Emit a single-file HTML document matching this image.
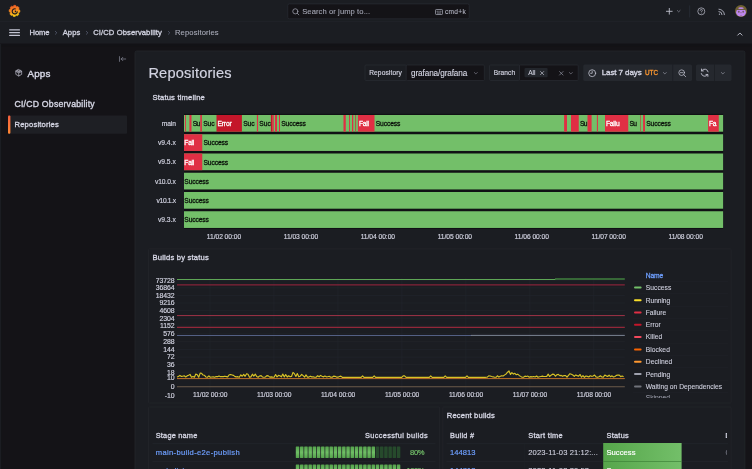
<!DOCTYPE html>
<html lang="en"><head><meta charset="utf-8"><title>Repositories - CI/CD Observability - Grafana</title>
<style>
html,body{margin:0;padding:0;}
body{width:752px;height:469px;overflow:hidden;background:#141317;position:relative;font-family:"Liberation Sans",sans-serif;-webkit-font-smoothing:antialiased;}
.t{position:absolute;white-space:nowrap;display:block;}
.b{position:absolute;box-sizing:border-box;}
svg{position:absolute;overflow:visible;}
#root{position:absolute;left:0;top:0;width:752px;height:469px;overflow:hidden;will-change:transform;}
</style></head><body><div id="root">
<svg style="left:0;top:0" width="752" height="469" viewBox="0 0 752 469"><rect x="0.00" y="0.00" width="752.00" height="43.50" fill="#1b1d22"/><rect x="0.00" y="20.90" width="752.00" height="0.60" fill="#24272d"/><rect x="0.00" y="44.00" width="752.00" height="2.40" fill="#121216"/><rect x="287.80" y="3.90" width="181.40" height="14.90" fill="#141317" rx="1.5" stroke="#2c2f37" stroke-width="0.6"/></svg>
<svg style="left:291.7px;top:7.6px" width="7.6" height="7.6" viewBox="0 0 16 16" fill="none" stroke="#a9abb9" stroke-width="1.5" stroke-linecap="round"><circle cx="7" cy="7" r="5.4"/><path d="M11.2 11.2l3.2 3.2"/></svg>
<span class="t" style="left:302.20px;top:6.00px;font-size:7.6px;line-height:11px;height:11px;color:#a3a5b3;font-weight:400;letter-spacing:0.089px;-webkit-text-stroke:0.10px #a3a5b3;">Search or jump to...</span>
<svg style="left:435px;top:8.6px" width="8" height="6" viewBox="0 0 16 12" fill="none" stroke="#a3a5b3" stroke-width="1.5"><rect x="1" y="1" width="14" height="10" rx="1.5"/><path d="M4 4.5h1M7.5 4.5h1M11 4.5h1M4.5 8h7" stroke-linecap="round"/></svg>
<span class="t" style="left:445.00px;top:7.00px;font-size:6.6px;line-height:10px;height:10px;color:#b4b5c3;font-weight:400;letter-spacing:0.275px;-webkit-text-stroke:0.09px #b4b5c3;">cmd+k</span>
<svg style="left:666.4px;top:8.2px" width="6.6" height="6.6" viewBox="0 0 16 16" fill="none" stroke="#c4c5d3" stroke-width="2.1" stroke-linecap="round"><path d="M8 1v14M1 8h14"/></svg>
<svg style="left:677.0px;top:10.0px" width="3.4" height="2.4" viewBox="0 0 10 7" fill="none" stroke="#a3a5b3" stroke-width="1.7" stroke-linecap="round" stroke-linejoin="round"><path d="M1 1.5l4 4 4-4"/></svg>
<svg style="left:0;top:0" width="752" height="469" viewBox="0 0 752 469"><rect x="689.50" y="5.40" width="0.60" height="12.00" fill="#2c323d"/></svg>
<svg style="left:696.8px;top:7.0px" width="8.6" height="8.6" viewBox="0 0 18 18" fill="none" stroke="#b4b5c3" stroke-width="1.6"><circle cx="9" cy="9" r="7.3"/><path d="M6.8 7.2c0-1.4 1-2.3 2.3-2.3s2.2.9 2.2 2c0 1.6-2.2 1.8-2.2 3.4" stroke-linecap="round"/><circle cx="9.1" cy="13" r=".7" fill="#b4b5c3" stroke="none"/></svg>
<svg style="left:718.2px;top:7.6px" width="7.6" height="7.6" viewBox="0 0 16 16" fill="none" stroke="#b4b5c3" stroke-width="1.9" stroke-linecap="round"><circle cx="3" cy="13" r="1.3" fill="#b4b5c3" stroke="none"/><path d="M2 7.5a6.5 6.5 0 0 1 6.5 6.5M2 2.5A11.5 11.5 0 0 1 13.5 14"/></svg>
<svg style="left:735px;top:5.4px" width="12" height="12" viewBox="0 0 24 24"><circle cx="12" cy="12" r="12" fill="#6f6230"/><ellipse cx="12" cy="14.600" rx="9.800" ry="8.600" fill="#bd86ee"/><ellipse cx="12" cy="6.200" rx="5.200" ry="1.500" fill="#bd86ee"/><rect x="3" y="8.300" width="18" height="1.700" fill="#5f5528"/><ellipse cx="7.600" cy="13.400" rx="1.900" ry="2.100" fill="#7a5c72"/><ellipse cx="16.400" cy="13.400" rx="1.900" ry="2.100" fill="#7a5c72"/><ellipse cx="12" cy="15.400" rx="1.400" ry=".9" fill="#6f5a3a"/><ellipse cx="12" cy="21.400" rx="1.500" ry="1" fill="#8a6a70"/></svg>
<svg style="left:9.2px;top:5.2px" width="11.0" height="12.1" viewBox="0 0 24 26.500"><defs><linearGradient id="lg" x1="0.45" y1="1" x2="0.25" y2="0"><stop offset="0" stop-color="#fcd116"/><stop offset=".5" stop-color="#f78a1e"/><stop offset="1" stop-color="#ef5a28"/></linearGradient></defs><path fill="url(#lg)" stroke="url(#lg)" stroke-width="1.2" stroke-linejoin="round" d="M10.68 0.60L14.50 0.79L15.95 3.56L16.53 3.85L19.50 3.26L22.07 6.21L21.21 9.23L21.43 9.86L23.93 11.63L23.74 15.60L21.08 17.10L20.80 17.71L21.37 20.80L18.53 23.47L15.63 22.58L15.02 22.81L13.32 25.40L9.50 25.21L8.05 22.44L7.47 22.15L4.50 22.74L1.93 19.79L2.79 16.77L2.57 16.14L0.07 14.37L0.26 10.40L2.92 8.90L3.20 8.29L2.63 5.20L5.47 2.53L8.37 3.42L8.98 3.19Z"/><path fill="none" stroke="#1a1c21" stroke-width="2.5" stroke-linecap="round" d="M13.57 8.39A5.6 5.6 0 1 0 18.11 14.87"/><circle cx="14.2" cy="14.2" r="1.700" fill="#1a1c21"/><path fill="none" stroke="#1a1c21" stroke-width="1.3" stroke-linecap="round" d="M14.20 15.73A2.0 2.0 0 0 0 14.20 12.27"/></svg>
<svg style="left:0;top:0" width="752" height="469" viewBox="0 0 752 469"><rect x="9.10" y="29.35" width="10.90" height="1.10" fill="#c4c5d3" rx="0.5"/><rect x="9.10" y="32.10" width="10.90" height="1.10" fill="#c4c5d3" rx="0.5"/><rect x="9.10" y="34.85" width="10.90" height="1.10" fill="#c4c5d3" rx="0.5"/></svg>
<span class="t" style="left:29.50px;top:27.00px;font-size:7.6px;line-height:11px;height:11px;color:#d0d1df;font-weight:400;letter-spacing:-0.068px;-webkit-text-stroke:0.32px #d0d1df;">Home</span>
<span class="t" style="left:62.75px;top:27.00px;font-size:7.6px;line-height:11px;height:11px;color:#d0d1df;font-weight:400;letter-spacing:0.044px;-webkit-text-stroke:0.32px #d0d1df;">Apps</span>
<span class="t" style="left:93.25px;top:27.00px;font-size:7.6px;line-height:11px;height:11px;color:#d0d1df;font-weight:400;letter-spacing:0.106px;-webkit-text-stroke:0.32px #d0d1df;">CI/CD Observability</span>
<span class="t" style="left:175.00px;top:27.00px;font-size:7.6px;line-height:11px;height:11px;color:#a9abb9;font-weight:400;letter-spacing:0.126px;-webkit-text-stroke:0.10px #a9abb9;">Repositories</span>
<svg style="left:54.90px;top:31.1px" width="2.2" height="3.6" viewBox="0 0 6 10" fill="none" stroke="#687089" stroke-width="1.8" stroke-linecap="round" stroke-linejoin="round"><path d="M1 1l4 4-4 4"/></svg>
<svg style="left:86.00px;top:31.1px" width="2.2" height="3.6" viewBox="0 0 6 10" fill="none" stroke="#687089" stroke-width="1.8" stroke-linecap="round" stroke-linejoin="round"><path d="M1 1l4 4-4 4"/></svg>
<svg style="left:168.00px;top:31.1px" width="2.2" height="3.6" viewBox="0 0 6 10" fill="none" stroke="#687089" stroke-width="1.8" stroke-linecap="round" stroke-linejoin="round"><path d="M1 1l4 4-4 4"/></svg>
<svg style="left:737.0px;top:31.8px" width="5.8" height="3.9" viewBox="0 0 12 8" fill="none" stroke="#c4c5d3" stroke-width="1.9" stroke-linecap="round" stroke-linejoin="round"><path d="M1.500 6.500l4.500-4.500 4.500 4.500"/></svg>
<svg style="left:118.8px;top:56.2px" width="7.2" height="6" viewBox="0 0 15 12" fill="none" stroke="#8f91a0" stroke-width="1.4" stroke-linecap="round" stroke-linejoin="round"><path d="M1 1v10M4.500 6h9.500M8 2.500L4.500 6 8 9.500"/></svg>
<svg style="left:14.9px;top:69.2px" width="7.5" height="7.6" viewBox="0 0 16 16" fill="none" stroke="#c0c1cf" stroke-width="1.5" stroke-linejoin="round" stroke-linecap="round"><path d="M8 1.200l6.200 3.400v6.800L8 14.800 1.800 11.400V4.600z"/><path d="M1.800 4.600L8 8l6.200-3.400M8 8v6.800M4.900 2.900l6.200 3.400M11.100 2.900L4.900 6.300"/></svg>
<span class="t" style="left:27.50px;top:67.00px;font-size:9.8px;line-height:14px;height:14px;color:#d4d5e3;font-weight:400;letter-spacing:0.166px;-webkit-text-stroke:0.41px #d4d5e3;">Apps</span>
<span class="t" style="left:14.50px;top:98.00px;font-size:8.7px;line-height:12px;height:12px;color:#d4d5e3;font-weight:400;letter-spacing:0.217px;-webkit-text-stroke:0.37px #d4d5e3;">CI/CD Observability</span>
<svg style="left:0;top:0" width="752" height="469" viewBox="0 0 752 469"><defs><linearGradient id="g1" x1="0" y1="0" x2="0" y2="1"><stop offset="0" stop-color="#f55f3e"/><stop offset="1" stop-color="#ff8833"/></linearGradient></defs><rect x="8.00" y="115.50" width="119.00" height="18.25" fill="#1e1f24" rx="1"/><rect x="8.00" y="115.50" width="2.40" height="18.25" fill="url(#g1)" rx="1"/></svg>
<span class="t" style="left:14.50px;top:119.00px;font-size:7.6px;line-height:11px;height:11px;color:#d4d5e3;font-weight:400;letter-spacing:0.188px;-webkit-text-stroke:0.32px #d4d5e3;">Repositories</span>
<svg style="left:0;top:0" width="752" height="469" viewBox="0 0 752 469"><rect x="0.00" y="44.00" width="1.10" height="425.00" fill="#1b1d22"/><rect x="135.00" y="51.00" width="609.90" height="429.00" fill="#1b1d22" rx="1.5" stroke="#25282d" stroke-width="0.7"/></svg>
<span class="t" style="left:148.40px;top:63.00px;font-size:14.6px;line-height:20px;height:20px;color:#d2d3e1;font-weight:400;letter-spacing:0.183px;-webkit-text-stroke:0.19px #d2d3e1;">Repositories</span>
<svg style="left:0;top:0" width="752" height="469" viewBox="0 0 752 469"><rect x="365.00" y="65.00" width="41.40" height="15.50" fill="#1b1d22" rx="1" stroke="#2c2f36" stroke-width="0.6"/></svg>
<span class="t" style="left:369.20px;top:68.00px;font-size:6.6px;line-height:10px;height:10px;color:#d0d1df;font-weight:400;letter-spacing:0.125px;-webkit-text-stroke:0.17px #d0d1df;">Repository</span>
<svg style="left:0;top:0" width="752" height="469" viewBox="0 0 752 469"><rect x="406.20" y="65.00" width="78.10" height="15.50" fill="#141317" rx="1" stroke="#2c2f36" stroke-width="0.6"/></svg>
<span class="t" style="left:411.00px;top:68.00px;font-size:8.2px;line-height:12px;height:12px;color:#d6d7e5;font-weight:400;letter-spacing:-0.107px;-webkit-text-stroke:0.11px #d6d7e5;">grafana/grafana</span>
<svg style="left:474.3px;top:72.0px" width="3.6" height="2.5" viewBox="0 0 10 7" fill="none" stroke="#9d9fac" stroke-width="1.6" stroke-linecap="round" stroke-linejoin="round"><path d="M1 1.500l4 4 4-4"/></svg>
<svg style="left:0;top:0" width="752" height="469" viewBox="0 0 752 469"><rect x="489.50" y="65.00" width="30.20" height="15.50" fill="#1b1d22" rx="1" stroke="#2c2f36" stroke-width="0.6"/></svg>
<span class="t" style="left:493.70px;top:68.00px;font-size:6.6px;line-height:10px;height:10px;color:#d0d1df;font-weight:400;letter-spacing:0.098px;-webkit-text-stroke:0.17px #d0d1df;">Branch</span>
<svg style="left:0;top:0" width="752" height="469" viewBox="0 0 752 469"><rect x="519.50" y="65.00" width="58.70" height="15.50" fill="#141317" rx="1" stroke="#2c2f36" stroke-width="0.6"/><rect x="524.50" y="68.00" width="23.10" height="9.20" fill="#23262c" rx="1"/></svg>
<span class="t" style="left:528.20px;top:68.00px;font-size:6.6px;line-height:10px;height:10px;color:#d0d1df;font-weight:400;letter-spacing:-0.045px;-webkit-text-stroke:0.09px #d0d1df;">All</span>
<svg style="left:539.6px;top:70.6px" width="4.200" height="4.200" viewBox="0 0 8 8" fill="none" stroke="#c4c5d3" stroke-width="1.300" stroke-linecap="round"><path d="M1 1l6 6M7 1L1 7"/></svg>
<svg style="left:559.2px;top:70.6px" width="4.600" height="4.600" viewBox="0 0 8 8" fill="none" stroke="#8f91a0" stroke-width="1.200" stroke-linecap="round"><path d="M1 1l6 6M7 1L1 7"/></svg>
<svg style="left:568.8px;top:72.0px" width="3.6" height="2.5" viewBox="0 0 10 7" fill="none" stroke="#9d9fac" stroke-width="1.6" stroke-linecap="round" stroke-linejoin="round"><path d="M1 1.500l4 4 4-4"/></svg>
<svg style="left:0;top:0" width="752" height="469" viewBox="0 0 752 469"><rect x="583.25" y="64.50" width="108.75" height="16.50" fill="#25282e" rx="1.5"/><rect x="672.50" y="64.50" width="0.60" height="16.50" fill="#191b20"/></svg>
<svg style="left:588.0px;top:68.6px" width="8.4" height="8.4" viewBox="0 0 16 16" fill="none" stroke="#c4c5d3" stroke-width="1.5" stroke-linecap="round"><circle cx="8" cy="8" r="6.600"/><path d="M8 4v4.200H5"/></svg>
<span class="t" style="left:601.75px;top:67.00px;font-size:8.0px;line-height:12px;height:12px;color:#d4d5e3;font-weight:400;letter-spacing:-0.097px;-webkit-text-stroke:0.34px #d4d5e3;">Last 7 days</span>
<span class="t" style="left:645.00px;top:68.00px;font-size:6.4px;line-height:10px;height:10px;color:#ff9830;font-weight:400;letter-spacing:-0.051px;-webkit-text-stroke:0.27px #ff9830;">UTC</span>
<svg style="left:662.8px;top:72.0px" width="3.6" height="2.5" viewBox="0 0 10 7" fill="none" stroke="#b4b5c3" stroke-width="1.6" stroke-linecap="round" stroke-linejoin="round"><path d="M1 1.500l4 4 4-4"/></svg>
<svg style="left:677.8px;top:68.6px" width="8.4" height="8.4" viewBox="0 0 16 16" fill="none" stroke="#c4c5d3" stroke-width="1.4" stroke-linecap="round"><circle cx="7" cy="7" r="5.400"/><path d="M11 11l3.800 3.800M4.600 7h4.800"/></svg>
<svg style="left:0;top:0" width="752" height="469" viewBox="0 0 752 469"><rect x="696.00" y="64.50" width="35.50" height="16.50" fill="#25282e" rx="1.5"/><rect x="714.40" y="64.50" width="0.60" height="16.50" fill="#191b20"/></svg>
<svg style="left:700.4px;top:68.0px" width="9.4" height="9.4" viewBox="0 0 16 16" fill="none" stroke="#c4c5d3" stroke-width="1.5" stroke-linecap="round" stroke-linejoin="round"><path d="M13.800 6.500A6 6 0 0 0 3 4.600M2.200 9.500A6 6 0 0 0 13 11.400"/><path d="M2.600 1.800v3.200h3.200M13.400 14.200v-3.200h-3.200"/></svg>
<svg style="left:721.3px;top:72.0px" width="3.6" height="2.5" viewBox="0 0 10 7" fill="none" stroke="#b4b5c3" stroke-width="1.6" stroke-linecap="round" stroke-linejoin="round"><path d="M1 1.500l4 4 4-4"/></svg>
<span class="t" style="left:152.50px;top:92.00px;font-size:7.6px;line-height:11px;height:11px;color:#d4d5e3;font-weight:400;letter-spacing:0.177px;-webkit-text-stroke:0.32px #d4d5e3;">Status timeline</span>
<svg style="left:0;top:0" width="752" height="469" viewBox="0 0 752 469"><rect x="184.00" y="113.80" width="539.10" height="115.15" fill="#101114"/><rect x="184.00" y="115.00" width="539.10" height="16.70" fill="#73bf69"/><rect x="185.00" y="115.00" width="0.90" height="16.70" fill="#e02f44"/><rect x="189.40" y="115.00" width="2.10" height="16.70" fill="#e02f44"/><rect x="200.25" y="115.00" width="1.65" height="16.70" fill="#e02f44"/><rect x="216.50" y="115.00" width="25.40" height="16.70" fill="#c4162a"/><rect x="256.90" y="115.00" width="1.20" height="16.70" fill="#e02f44"/><rect x="270.90" y="115.00" width="1.30" height="16.70" fill="#c4162a"/><rect x="272.20" y="115.00" width="1.55" height="16.70" fill="#e02f44"/><rect x="275.00" y="115.00" width="2.00" height="16.70" fill="#e02f44"/><rect x="279.00" y="115.00" width="1.00" height="16.70" fill="#e02f44"/><rect x="343.50" y="115.00" width="2.25" height="16.70" fill="#e02f44"/><rect x="349.10" y="115.00" width="0.90" height="16.70" fill="#e02f44"/><rect x="352.00" y="115.00" width="1.25" height="16.70" fill="#e02f44"/><rect x="355.10" y="115.00" width="1.00" height="16.70" fill="#b5533f"/><rect x="357.90" y="115.00" width="16.60" height="16.70" fill="#e02f44"/><rect x="564.10" y="115.00" width="2.90" height="16.70" fill="#e02f44"/><rect x="571.00" y="115.00" width="7.75" height="16.70" fill="#e02f44"/><rect x="587.50" y="115.00" width="4.10" height="16.70" fill="#e02f44"/><rect x="596.90" y="115.00" width="1.00" height="16.70" fill="#e02f44"/><rect x="605.00" y="115.00" width="23.25" height="16.70" fill="#e02f44"/><rect x="640.25" y="115.00" width="0.75" height="16.70" fill="#b5533f"/><rect x="643.10" y="115.00" width="1.90" height="16.70" fill="#e02f44"/><rect x="708.10" y="115.00" width="10.65" height="16.70" fill="#e02f44"/><rect x="184.00" y="134.25" width="539.10" height="16.70" fill="#73bf69"/><rect x="184.00" y="134.25" width="18.25" height="16.70" fill="#e02f44"/><rect x="184.00" y="153.50" width="539.10" height="16.70" fill="#73bf69"/><rect x="184.00" y="153.50" width="18.25" height="16.70" fill="#e02f44"/><rect x="184.00" y="172.75" width="539.10" height="16.70" fill="#73bf69"/><rect x="184.00" y="192.00" width="539.10" height="16.70" fill="#73bf69"/><rect x="184.00" y="211.25" width="539.10" height="16.70" fill="#73bf69"/></svg>
<span class="t" style="left:192.75px;top:119.00px;font-size:6.7px;line-height:10px;height:10px;color:#0b120b;font-weight:400;letter-spacing:-0.598px;-webkit-text-stroke:0.28px #0b120b;">Su</span>
<span class="t" style="left:203.15px;top:119.00px;font-size:6.7px;line-height:10px;height:10px;color:#0b120b;font-weight:400;letter-spacing:-0.048px;-webkit-text-stroke:0.28px #0b120b;">Suc</span>
<span class="t" style="left:217.50px;top:119.00px;font-size:6.7px;line-height:10px;height:10px;color:#ffffff;font-weight:400;letter-spacing:-0.178px;-webkit-text-stroke:0.28px #ffffff;">Error</span>
<span class="t" style="left:243.15px;top:119.00px;font-size:6.7px;line-height:10px;height:10px;color:#0b120b;font-weight:400;letter-spacing:-0.048px;-webkit-text-stroke:0.28px #0b120b;">Suc</span>
<span class="t" style="left:259.35px;top:119.00px;font-size:6.7px;line-height:10px;height:10px;color:#0b120b;font-weight:400;letter-spacing:-0.048px;-webkit-text-stroke:0.28px #0b120b;">Suc</span>
<span class="t" style="left:281.25px;top:119.00px;font-size:6.7px;line-height:10px;height:10px;color:#0b120b;font-weight:400;letter-spacing:-0.103px;-webkit-text-stroke:0.28px #0b120b;">Success</span>
<span class="t" style="left:358.90px;top:119.00px;font-size:6.7px;line-height:10px;height:10px;color:#ffffff;font-weight:400;letter-spacing:-0.249px;-webkit-text-stroke:0.28px #ffffff;">Fail</span>
<span class="t" style="left:375.75px;top:119.00px;font-size:6.7px;line-height:10px;height:10px;color:#0b120b;font-weight:400;letter-spacing:-0.103px;-webkit-text-stroke:0.28px #0b120b;">Success</span>
<span class="t" style="left:580.00px;top:119.00px;font-size:6.7px;line-height:10px;height:10px;color:#0b120b;font-weight:400;letter-spacing:-0.598px;-webkit-text-stroke:0.28px #0b120b;">Su</span>
<span class="t" style="left:606.00px;top:119.00px;font-size:6.7px;line-height:10px;height:10px;color:#ffffff;font-weight:400;letter-spacing:-0.224px;-webkit-text-stroke:0.28px #ffffff;">Failu</span>
<span class="t" style="left:629.50px;top:119.00px;font-size:6.7px;line-height:10px;height:10px;color:#0b120b;font-weight:400;letter-spacing:-0.598px;-webkit-text-stroke:0.28px #0b120b;">Su</span>
<span class="t" style="left:646.25px;top:119.00px;font-size:6.7px;line-height:10px;height:10px;color:#0b120b;font-weight:400;letter-spacing:-0.103px;-webkit-text-stroke:0.28px #0b120b;">Success</span>
<span class="t" style="left:709.10px;top:119.00px;font-size:6.7px;line-height:10px;height:10px;color:#ffffff;font-weight:400;letter-spacing:-0.459px;-webkit-text-stroke:0.28px #ffffff;">Fa</span>
<span class="t" style="left:161.80px;top:119.00px;font-size:6.7px;line-height:10px;height:10px;color:#d0d1df;font-weight:400;letter-spacing:-0.131px;-webkit-text-stroke:0.17px #d0d1df;">main</span>
<span class="t" style="left:184.30px;top:138.00px;font-size:6.7px;line-height:10px;height:10px;color:#ffffff;font-weight:400;letter-spacing:-0.249px;-webkit-text-stroke:0.28px #ffffff;">Fail</span>
<span class="t" style="left:203.50px;top:138.00px;font-size:6.7px;line-height:10px;height:10px;color:#0b120b;font-weight:400;letter-spacing:-0.103px;-webkit-text-stroke:0.28px #0b120b;">Success</span>
<span class="t" style="left:157.90px;top:138.00px;font-size:6.7px;line-height:10px;height:10px;color:#d0d1df;font-weight:400;letter-spacing:0.004px;-webkit-text-stroke:0.17px #d0d1df;">v9.4.x</span>
<span class="t" style="left:184.30px;top:158.00px;font-size:6.7px;line-height:10px;height:10px;color:#ffffff;font-weight:400;letter-spacing:-0.249px;-webkit-text-stroke:0.28px #ffffff;">Fail</span>
<span class="t" style="left:203.50px;top:158.00px;font-size:6.7px;line-height:10px;height:10px;color:#0b120b;font-weight:400;letter-spacing:-0.103px;-webkit-text-stroke:0.28px #0b120b;">Success</span>
<span class="t" style="left:157.90px;top:157.00px;font-size:6.7px;line-height:10px;height:10px;color:#d0d1df;font-weight:400;letter-spacing:0.004px;-webkit-text-stroke:0.17px #d0d1df;">v9.5.x</span>
<span class="t" style="left:184.30px;top:177.00px;font-size:6.7px;line-height:10px;height:10px;color:#0b120b;font-weight:400;letter-spacing:-0.103px;-webkit-text-stroke:0.28px #0b120b;">Success</span>
<span class="t" style="left:154.90px;top:177.00px;font-size:6.7px;line-height:10px;height:10px;color:#d0d1df;font-weight:400;letter-spacing:-0.100px;-webkit-text-stroke:0.17px #d0d1df;">v10.0.x</span>
<span class="t" style="left:184.30px;top:196.00px;font-size:6.7px;line-height:10px;height:10px;color:#0b120b;font-weight:400;letter-spacing:-0.103px;-webkit-text-stroke:0.28px #0b120b;">Success</span>
<span class="t" style="left:156.60px;top:196.00px;font-size:6.7px;line-height:10px;height:10px;color:#d0d1df;font-weight:400;letter-spacing:-0.343px;-webkit-text-stroke:0.17px #d0d1df;">v10.1.x</span>
<span class="t" style="left:184.30px;top:215.00px;font-size:6.7px;line-height:10px;height:10px;color:#0b120b;font-weight:400;letter-spacing:-0.103px;-webkit-text-stroke:0.28px #0b120b;">Success</span>
<span class="t" style="left:157.90px;top:215.00px;font-size:6.7px;line-height:10px;height:10px;color:#d0d1df;font-weight:400;letter-spacing:0.004px;-webkit-text-stroke:0.17px #d0d1df;">v9.3.x</span>
<span class="t" style="left:206.80px;top:232.00px;font-size:6.7px;line-height:10px;height:10px;color:#d0d1df;font-weight:400;letter-spacing:-0.045px;-webkit-text-stroke:0.17px #d0d1df;">11/02 00:00</span>
<span class="t" style="left:283.75px;top:232.00px;font-size:6.7px;line-height:10px;height:10px;color:#d0d1df;font-weight:400;letter-spacing:-0.045px;-webkit-text-stroke:0.17px #d0d1df;">11/03 00:00</span>
<span class="t" style="left:360.70px;top:232.00px;font-size:6.7px;line-height:10px;height:10px;color:#d0d1df;font-weight:400;letter-spacing:-0.045px;-webkit-text-stroke:0.17px #d0d1df;">11/04 00:00</span>
<span class="t" style="left:437.65px;top:232.00px;font-size:6.7px;line-height:10px;height:10px;color:#d0d1df;font-weight:400;letter-spacing:-0.045px;-webkit-text-stroke:0.17px #d0d1df;">11/05 00:00</span>
<span class="t" style="left:514.60px;top:232.00px;font-size:6.7px;line-height:10px;height:10px;color:#d0d1df;font-weight:400;letter-spacing:-0.045px;-webkit-text-stroke:0.17px #d0d1df;">11/06 00:00</span>
<span class="t" style="left:591.55px;top:232.00px;font-size:6.7px;line-height:10px;height:10px;color:#d0d1df;font-weight:400;letter-spacing:-0.045px;-webkit-text-stroke:0.17px #d0d1df;">11/07 00:00</span>
<span class="t" style="left:668.50px;top:232.00px;font-size:6.7px;line-height:10px;height:10px;color:#d0d1df;font-weight:400;letter-spacing:-0.045px;-webkit-text-stroke:0.17px #d0d1df;">11/08 00:00</span>
<svg style="left:0;top:0" width="752" height="469" viewBox="0 0 752 469"><rect x="148.50" y="248.90" width="582.70" height="154.10" fill="#1b1d22" rx="1" stroke="#26282e" stroke-width="0.6"/></svg>
<span class="t" style="left:152.50px;top:252.00px;font-size:7.6px;line-height:11px;height:11px;color:#d4d5e3;font-weight:400;letter-spacing:0.205px;-webkit-text-stroke:0.32px #d4d5e3;">Builds by status</span>
<svg style="left:0;top:0" width="752" height="469" viewBox="0 0 752 469" fill="none"><path d="M177.0 280.10H624.8" stroke="#24272d" stroke-width="0.6"/><path d="M177.0 287.85H624.8" stroke="#24272d" stroke-width="0.6"/><path d="M177.0 295.40H624.8" stroke="#24272d" stroke-width="0.6"/><path d="M177.0 303.00H624.8" stroke="#24272d" stroke-width="0.6"/><path d="M177.0 310.60H624.8" stroke="#24272d" stroke-width="0.6"/><path d="M177.0 318.20H624.8" stroke="#24272d" stroke-width="0.6"/><path d="M177.0 326.00H624.8" stroke="#24272d" stroke-width="0.6"/><path d="M177.0 333.80H624.8" stroke="#24272d" stroke-width="0.6"/><path d="M177.0 341.70H624.8" stroke="#24272d" stroke-width="0.6"/><path d="M177.0 349.40H624.8" stroke="#24272d" stroke-width="0.6"/><path d="M177.0 357.10H624.8" stroke="#24272d" stroke-width="0.6"/><path d="M177.0 364.70H624.8" stroke="#24272d" stroke-width="0.6"/><path d="M177.0 372.20H624.8" stroke="#24272d" stroke-width="0.6"/><path d="M177.0 386.70H624.8" stroke="#24272d" stroke-width="0.6"/><path d="M210.00 278V392" stroke="#24272d" stroke-width="0.6"/><path d="M273.97 278V392" stroke="#24272d" stroke-width="0.6"/><path d="M337.94 278V392" stroke="#24272d" stroke-width="0.6"/><path d="M401.91 278V392" stroke="#24272d" stroke-width="0.6"/><path d="M465.88 278V392" stroke="#24272d" stroke-width="0.6"/><path d="M529.85 278V392" stroke="#24272d" stroke-width="0.6"/><path d="M593.82 278V392" stroke="#24272d" stroke-width="0.6"/><path d="M177.0 279.5H555.5" stroke="#5ea656" stroke-width="1.1"/><path d="M555 279.0H624.8" stroke="#41803f" stroke-width="1.7"/><path d="M177.0 284.8H624.8" stroke="#862338" stroke-width="1.15"/><path d="M177.0 315.6H624.8" stroke="#a9344a" stroke-width="0.95"/><path d="M177.0 327.3H624.8" stroke="#b92b41" stroke-width="0.95"/><path d="M177.0 335.5H471.5" stroke="#56648a" stroke-width="0.95"/><path d="M471 335.4H624.8" stroke="#7c8494" stroke-width="1.0"/><path d="M177.0 386.8H624.8" stroke="#6b5a49" stroke-width="1.1"/><path d="M177.0 376.84 L178.4 376.51 L179.9 375.37 L181.3 376.44 L182.8 376.20 L184.2 375.81 L185.7 376.98 L187.1 375.86 L188.6 375.27 L190.0 374.37 L191.5 377.15 L192.9 376.49 L194.4 377.15 L195.8 374.02 L197.3 374.66 L198.7 377.25 L200.2 373.11 L201.6 373.30 L203.1 375.05 L204.5 375.30 L206.0 377.02 L207.4 377.29 L208.9 375.91 L210.3 377.24 L211.8 377.01 L213.2 376.93 L214.7 377.28 L216.1 376.54 L217.6 376.67 L219.0 375.92 L220.5 376.69 L221.9 376.49 L223.4 376.64 L224.8 376.20 L226.3 376.57 L227.7 376.90 L229.2 374.73 L230.6 374.55 L232.1 375.00 L233.5 375.39 L235.0 376.66 L236.4 376.87 L237.9 376.69 L239.3 377.21 L240.8 374.77 L242.2 376.26 L243.7 374.31 L245.1 376.30 L246.6 373.73 L248.0 374.31 L249.5 377.30 L250.9 376.89 L252.4 374.21 L253.8 376.12 L255.3 374.16 L256.7 376.47 L258.2 377.23 L259.6 375.95 L261.1 375.67 L262.5 376.98 L264.0 377.24 L265.4 377.00 L266.9 375.66 L268.3 375.90 L269.8 377.18 L271.2 376.91 L272.7 377.18 L274.1 377.23 L275.6 374.57 L277.0 376.94 L278.5 375.38 L279.9 375.82 L281.4 376.83 L282.8 374.09 L284.3 377.00 L285.7 374.48 L287.2 377.04 L288.6 375.72 L290.1 376.69 L291.5 376.47 L293.0 372.42 L294.4 373.67 L295.9 376.41 L297.3 373.52 L298.8 376.83 L300.2 376.24 L301.7 374.45 L303.1 375.58 L304.6 377.19 L306.0 374.92 L307.5 377.07 L308.9 377.06 L310.4 376.20 L311.8 376.88 L313.3 376.87 L314.7 377.23 L316.2 377.20 L317.6 375.73 L319.1 376.80 L320.5 375.40 L322.0 376.28 L323.4 376.87 L324.9 376.07 L326.3 376.83 L327.8 376.70 L329.2 376.24 L330.7 377.18 L332.1 377.21 L333.6 376.16 L335.0 376.32 L336.5 377.11 L337.9 377.17 L339.4 376.45 L340.8 376.11 L342.3 377.30 L343.7 377.30 L345.2 377.30 L346.6 377.30 L348.1 377.30 L349.5 377.30 L351.0 377.30 L352.4 377.30 L353.9 377.30 L355.3 377.30 L356.8 377.30 L358.2 377.30 L359.7 377.30 L361.1 377.30 L362.6 375.80 L364.0 377.30 L365.5 377.30 L366.9 377.30 L368.4 377.30 L369.8 377.30 L371.3 377.30 L372.7 377.30 L374.2 375.80 L375.6 377.30 L377.1 377.30 L378.5 377.30 L380.0 377.30 L381.4 377.30 L382.9 377.30 L384.3 377.30 L385.8 377.30 L387.2 377.30 L388.7 377.30 L390.1 377.30 L391.6 377.30 L393.0 377.30 L394.5 377.30 L395.9 377.30 L397.4 377.30 L398.8 377.30 L400.3 377.30 L401.7 377.30 L403.2 375.80 L404.6 375.80 L406.1 377.30 L407.5 377.30 L409.0 377.30 L410.4 377.30 L411.9 377.30 L413.3 377.30 L414.8 377.30 L416.2 377.30 L417.7 377.30 L419.1 377.30 L420.6 377.30 L422.0 377.30 L423.5 377.30 L424.9 377.30 L426.4 377.30 L427.8 377.30 L429.3 377.30 L430.7 375.80 L432.2 377.30 L433.6 377.30 L435.1 377.30 L436.5 377.30 L438.0 377.30 L439.4 377.30 L440.9 377.30 L442.3 377.30 L443.8 377.30 L445.2 375.80 L446.7 377.30 L448.1 377.30 L449.6 377.30 L451.0 377.30 L452.5 377.30 L453.9 377.30 L455.4 377.30 L456.8 377.30 L458.3 377.30 L459.7 377.30 L461.2 377.30 L462.6 377.30 L464.1 377.30 L465.5 377.30 L467.0 375.80 L468.4 377.30 L469.9 377.30 L471.3 377.30 L472.8 377.30 L474.2 377.30 L475.7 377.30 L477.1 377.30 L478.6 377.30 L480.0 377.30 L481.5 377.30 L482.9 377.30 L484.4 377.30 L485.8 377.30 L487.3 377.14 L488.7 375.81 L490.2 375.96 L491.6 376.51 L493.1 376.82 L494.5 377.23 L496.0 377.28 L497.4 375.78 L498.9 377.09 L500.3 376.28 L501.8 375.69 L503.2 376.03 L504.7 374.86 L506.1 373.95 L507.6 372.20 L509.0 370.96 L510.5 374.44 L511.9 372.62 L513.4 374.11 L514.8 373.32 L516.3 374.72 L517.7 374.18 L519.2 375.41 L520.6 376.38 L522.1 377.29 L523.5 377.30 L525.0 376.16 L526.4 376.51 L527.9 376.07 L529.3 377.29 L530.8 376.61 L532.2 376.83 L533.7 376.46 L535.1 377.04 L536.6 376.00 L538.0 377.27 L539.5 376.74 L540.9 376.45 L542.4 376.18 L543.8 376.45 L545.3 376.51 L546.7 376.36 L548.2 374.12 L549.6 376.47 L551.1 375.18 L552.5 374.19 L554.0 374.33 L555.4 376.24 L556.9 374.71 L558.3 374.37 L559.8 375.65 L561.2 375.44 L562.7 376.36 L564.1 375.61 L565.6 375.50 L567.0 377.19 L568.5 375.38 L569.9 373.73 L571.4 374.29 L572.8 374.99 L574.3 376.34 L575.7 374.96 L577.2 375.62 L578.6 376.16 L580.1 374.49 L581.5 377.19 L583.0 375.56 L584.4 377.28 L585.9 376.02 L587.3 376.37 L588.8 376.97 L590.2 375.73 L591.7 376.32 L593.1 375.99 L594.6 374.98 L596.0 376.91 L597.5 377.30 L599.0 376.82 L600.4 375.79 L601.9 377.02 L603.3 377.08 L604.8 375.04 L606.2 375.85 L607.7 376.47 L609.1 375.09 L610.6 376.76 L612.0 375.83 L613.5 377.03 L614.9 376.50 L616.4 375.38 L617.8 375.01 L619.3 375.13 L620.7 376.62 L622.2 376.08 L623.6 376.78" stroke="#d8c326" stroke-width="1.15" stroke-linejoin="round"/><path d="M177.0 378.6H624.8" stroke="#c0712a" stroke-width="1.0"/></svg>
<span class="t" style="left:155.70px;top:276.00px;font-size:6.9px;line-height:10px;height:10px;color:#d0d1df;font-weight:400;letter-spacing:-0.058px;-webkit-text-stroke:0.17px #d0d1df;">73728</span>
<span class="t" style="left:155.70px;top:283.00px;font-size:6.9px;line-height:10px;height:10px;color:#d0d1df;font-weight:400;letter-spacing:-0.058px;-webkit-text-stroke:0.17px #d0d1df;">36864</span>
<span class="t" style="left:155.70px;top:291.00px;font-size:6.9px;line-height:10px;height:10px;color:#d0d1df;font-weight:400;letter-spacing:-0.058px;-webkit-text-stroke:0.17px #d0d1df;">18432</span>
<span class="t" style="left:159.48px;top:298.00px;font-size:6.9px;line-height:10px;height:10px;color:#d0d1df;font-weight:400;letter-spacing:-0.058px;-webkit-text-stroke:0.17px #d0d1df;">9216</span>
<span class="t" style="left:159.48px;top:306.00px;font-size:6.9px;line-height:10px;height:10px;color:#d0d1df;font-weight:400;letter-spacing:-0.058px;-webkit-text-stroke:0.17px #d0d1df;">4608</span>
<span class="t" style="left:159.48px;top:314.00px;font-size:6.9px;line-height:10px;height:10px;color:#d0d1df;font-weight:400;letter-spacing:-0.058px;-webkit-text-stroke:0.17px #d0d1df;">2304</span>
<span class="t" style="left:159.98px;top:321.00px;font-size:6.9px;line-height:10px;height:10px;color:#d0d1df;font-weight:400;letter-spacing:-0.056px;-webkit-text-stroke:0.17px #d0d1df;">1152</span>
<span class="t" style="left:163.26px;top:329.00px;font-size:6.9px;line-height:10px;height:10px;color:#d0d1df;font-weight:400;letter-spacing:-0.058px;-webkit-text-stroke:0.17px #d0d1df;">576</span>
<span class="t" style="left:163.26px;top:337.00px;font-size:6.9px;line-height:10px;height:10px;color:#d0d1df;font-weight:400;letter-spacing:-0.058px;-webkit-text-stroke:0.17px #d0d1df;">288</span>
<span class="t" style="left:163.26px;top:345.00px;font-size:6.9px;line-height:10px;height:10px;color:#d0d1df;font-weight:400;letter-spacing:-0.058px;-webkit-text-stroke:0.17px #d0d1df;">144</span>
<span class="t" style="left:167.04px;top:352.00px;font-size:6.9px;line-height:10px;height:10px;color:#d0d1df;font-weight:400;letter-spacing:-0.058px;-webkit-text-stroke:0.17px #d0d1df;">72</span>
<span class="t" style="left:167.04px;top:360.00px;font-size:6.9px;line-height:10px;height:10px;color:#d0d1df;font-weight:400;letter-spacing:-0.058px;-webkit-text-stroke:0.17px #d0d1df;">36</span>
<span class="t" style="left:167.04px;top:368.00px;font-size:6.9px;line-height:10px;height:10px;color:#d0d1df;font-weight:400;letter-spacing:-0.058px;-webkit-text-stroke:0.17px #d0d1df;">18</span>
<span class="t" style="left:167.04px;top:373.00px;font-size:6.9px;line-height:10px;height:10px;color:#d0d1df;font-weight:400;letter-spacing:-0.058px;-webkit-text-stroke:0.17px #d0d1df;">10</span>
<span class="t" style="left:170.82px;top:382.00px;font-size:6.9px;line-height:10px;height:10px;color:#d0d1df;font-weight:400;letter-spacing:-0.058px;-webkit-text-stroke:0.17px #d0d1df;">0</span>
<span class="t" style="left:164.78px;top:391.00px;font-size:6.9px;line-height:10px;height:10px;color:#d0d1df;font-weight:400;letter-spacing:-0.050px;-webkit-text-stroke:0.17px #d0d1df;">-10</span>
<span class="t" style="left:193.00px;top:390.00px;font-size:6.7px;line-height:10px;height:10px;color:#d0d1df;font-weight:400;letter-spacing:-0.045px;-webkit-text-stroke:0.17px #d0d1df;">11/02 00:00</span>
<span class="t" style="left:256.97px;top:390.00px;font-size:6.7px;line-height:10px;height:10px;color:#d0d1df;font-weight:400;letter-spacing:-0.045px;-webkit-text-stroke:0.17px #d0d1df;">11/03 00:00</span>
<span class="t" style="left:320.94px;top:390.00px;font-size:6.7px;line-height:10px;height:10px;color:#d0d1df;font-weight:400;letter-spacing:-0.045px;-webkit-text-stroke:0.17px #d0d1df;">11/04 00:00</span>
<span class="t" style="left:384.91px;top:390.00px;font-size:6.7px;line-height:10px;height:10px;color:#d0d1df;font-weight:400;letter-spacing:-0.045px;-webkit-text-stroke:0.17px #d0d1df;">11/05 00:00</span>
<span class="t" style="left:448.88px;top:390.00px;font-size:6.7px;line-height:10px;height:10px;color:#d0d1df;font-weight:400;letter-spacing:-0.045px;-webkit-text-stroke:0.17px #d0d1df;">11/06 00:00</span>
<span class="t" style="left:512.85px;top:390.00px;font-size:6.7px;line-height:10px;height:10px;color:#d0d1df;font-weight:400;letter-spacing:-0.045px;-webkit-text-stroke:0.17px #d0d1df;">11/07 00:00</span>
<span class="t" style="left:576.82px;top:390.00px;font-size:6.7px;line-height:10px;height:10px;color:#d0d1df;font-weight:400;letter-spacing:-0.045px;-webkit-text-stroke:0.17px #d0d1df;">11/08 00:00</span>
<span class="t" style="left:645.75px;top:271.00px;font-size:6.7px;line-height:10px;height:10px;color:#6e9fff;font-weight:400;letter-spacing:-0.093px;-webkit-text-stroke:0.28px #6e9fff;">Name</span>
<svg style="left:0;top:0" width="752" height="469" viewBox="0 0 752 469"><rect x="634.00" y="286.60" width="7.60" height="2.00" fill="#73bf69" rx="1"/></svg>
<span class="t" style="left:645.75px;top:283.00px;font-size:6.7px;line-height:10px;height:10px;color:#d0d1df;font-weight:400;letter-spacing:0.040px;-webkit-text-stroke:0.09px #d0d1df;">Success</span>
<svg style="left:0;top:0" width="752" height="469" viewBox="0 0 752 469"><rect x="633.00" y="293.40" width="95.00" height="0.50" fill="#212329"/><rect x="634.00" y="299.20" width="7.60" height="2.00" fill="#fade2a" rx="1"/></svg>
<span class="t" style="left:645.75px;top:296.00px;font-size:6.7px;line-height:10px;height:10px;color:#d0d1df;font-weight:400;letter-spacing:-0.080px;-webkit-text-stroke:0.09px #d0d1df;">Running</span>
<svg style="left:0;top:0" width="752" height="469" viewBox="0 0 752 469"><rect x="633.00" y="306.00" width="95.00" height="0.50" fill="#212329"/><rect x="634.00" y="311.50" width="7.60" height="2.00" fill="#e02f44" rx="1"/></svg>
<span class="t" style="left:645.75px;top:308.00px;font-size:6.7px;line-height:10px;height:10px;color:#d0d1df;font-weight:400;letter-spacing:-0.011px;-webkit-text-stroke:0.09px #d0d1df;">Failure</span>
<svg style="left:0;top:0" width="752" height="469" viewBox="0 0 752 469"><rect x="633.00" y="318.30" width="95.00" height="0.50" fill="#212329"/><rect x="634.00" y="323.80" width="7.60" height="2.00" fill="#c4162a" rx="1"/></svg>
<span class="t" style="left:645.75px;top:320.00px;font-size:6.7px;line-height:10px;height:10px;color:#d0d1df;font-weight:400;letter-spacing:0.022px;-webkit-text-stroke:0.09px #d0d1df;">Error</span>
<svg style="left:0;top:0" width="752" height="469" viewBox="0 0 752 469"><rect x="633.00" y="330.60" width="95.00" height="0.50" fill="#212329"/><rect x="634.00" y="336.10" width="7.60" height="2.00" fill="#f2495c" rx="1"/></svg>
<span class="t" style="left:645.75px;top:332.00px;font-size:6.7px;line-height:10px;height:10px;color:#d0d1df;font-weight:400;letter-spacing:0.002px;-webkit-text-stroke:0.09px #d0d1df;">Killed</span>
<svg style="left:0;top:0" width="752" height="469" viewBox="0 0 752 469"><rect x="633.00" y="342.90" width="95.00" height="0.50" fill="#212329"/><rect x="634.00" y="348.40" width="7.60" height="2.00" fill="#fa6400" rx="1"/></svg>
<span class="t" style="left:645.75px;top:345.00px;font-size:6.7px;line-height:10px;height:10px;color:#d0d1df;font-weight:400;letter-spacing:0.052px;-webkit-text-stroke:0.09px #d0d1df;">Blocked</span>
<svg style="left:0;top:0" width="752" height="469" viewBox="0 0 752 469"><rect x="633.00" y="355.20" width="95.00" height="0.50" fill="#212329"/><rect x="634.00" y="360.70" width="7.60" height="2.00" fill="#ff9830" rx="1"/></svg>
<span class="t" style="left:645.75px;top:357.00px;font-size:6.7px;line-height:10px;height:10px;color:#d0d1df;font-weight:400;letter-spacing:0.066px;-webkit-text-stroke:0.09px #d0d1df;">Declined</span>
<svg style="left:0;top:0" width="752" height="469" viewBox="0 0 752 469"><rect x="633.00" y="367.50" width="95.00" height="0.50" fill="#212329"/><rect x="634.00" y="373.10" width="7.60" height="2.00" fill="#9fa1ae" rx="1"/></svg>
<span class="t" style="left:645.75px;top:370.00px;font-size:6.7px;line-height:10px;height:10px;color:#d0d1df;font-weight:400;letter-spacing:0.002px;-webkit-text-stroke:0.09px #d0d1df;">Pending</span>
<svg style="left:0;top:0" width="752" height="469" viewBox="0 0 752 469"><rect x="633.00" y="379.90" width="95.00" height="0.50" fill="#212329"/><rect x="634.00" y="385.50" width="7.60" height="2.00" fill="#70737a" rx="1"/></svg>
<span class="t" style="left:645.75px;top:382.00px;font-size:6.7px;line-height:10px;height:10px;color:#d0d1df;font-weight:400;letter-spacing:0.022px;-webkit-text-stroke:0.09px #d0d1df;">Waiting on Dependencies</span>
<svg style="left:0;top:0" width="752" height="469" viewBox="0 0 752 469"><rect x="633.00" y="392.30" width="95.00" height="0.50" fill="#212329"/><rect x="633.00" y="281.10" width="95.00" height="0.50" fill="#212329"/></svg>
<div class="b" style="left:633px;top:392.6px;width:96px;height:5.0px;overflow:hidden"><span class="t" style="left:12.75px;top:0.4px;font-size:6.7px;line-height:10px;color:#a9abb9">Skipped</span></div>
<svg style="left:0;top:0" width="752" height="469" viewBox="0 0 752 469"><rect x="148.50" y="407.00" width="291.10" height="73.00" fill="#1b1d22" rx="1" stroke="#26282e" stroke-width="0.6"/></svg>
<span class="t" style="left:155.75px;top:430.00px;font-size:7.4px;line-height:11px;height:11px;color:#d4d5e3;font-weight:400;letter-spacing:0.184px;-webkit-text-stroke:0.31px #d4d5e3;">Stage name</span>
<span class="t" style="left:365.00px;top:430.00px;font-size:7.4px;line-height:11px;height:11px;color:#d4d5e3;font-weight:400;letter-spacing:0.343px;-webkit-text-stroke:0.31px #d4d5e3;">Successful builds</span>
<svg style="left:0;top:0" width="752" height="469" viewBox="0 0 752 469"><rect x="152.50" y="443.50" width="283.00" height="0.60" fill="#25282e"/><rect x="152.50" y="461.30" width="283.00" height="0.60" fill="#25282e"/></svg>
<span class="t" style="left:155.75px;top:447.00px;font-size:7.6px;line-height:11px;height:11px;color:#6e9fff;font-weight:400;letter-spacing:0.335px;-webkit-text-stroke:0.19px #6e9fff;">main-build-e2e-publish</span>
<svg style="left:0;top:0" width="752" height="469" viewBox="0 0 752 469"><defs><linearGradient id="g2" x1="0" y1="0" x2="0" y2="1"><stop offset="0" stop-color="#55a34c"/><stop offset="0.5" stop-color="#6fbd65"/><stop offset="1" stop-color="#55a34c"/></linearGradient></defs><rect x="295.80" y="446.60" width="3.49" height="11.40" fill="url(#g2)" rx="0.4"/><rect x="300.01" y="446.60" width="3.49" height="11.40" fill="url(#g2)" rx="0.4"/><rect x="304.22" y="446.60" width="3.49" height="11.40" fill="url(#g2)" rx="0.4"/><rect x="308.43" y="446.60" width="3.49" height="11.40" fill="url(#g2)" rx="0.4"/><rect x="312.64" y="446.60" width="3.49" height="11.40" fill="url(#g2)" rx="0.4"/><rect x="316.84" y="446.60" width="3.49" height="11.40" fill="url(#g2)" rx="0.4"/><rect x="321.05" y="446.60" width="3.49" height="11.40" fill="url(#g2)" rx="0.4"/><rect x="325.26" y="446.60" width="3.49" height="11.40" fill="url(#g2)" rx="0.4"/><rect x="329.47" y="446.60" width="3.49" height="11.40" fill="url(#g2)" rx="0.4"/><rect x="333.68" y="446.60" width="3.49" height="11.40" fill="url(#g2)" rx="0.4"/><rect x="337.89" y="446.60" width="3.49" height="11.40" fill="url(#g2)" rx="0.4"/><rect x="342.10" y="446.60" width="3.49" height="11.40" fill="url(#g2)" rx="0.4"/><rect x="346.31" y="446.60" width="3.49" height="11.40" fill="url(#g2)" rx="0.4"/><rect x="350.51" y="446.60" width="3.49" height="11.40" fill="url(#g2)" rx="0.4"/><rect x="354.72" y="446.60" width="3.49" height="11.40" fill="url(#g2)" rx="0.4"/><rect x="358.93" y="446.60" width="3.49" height="11.40" fill="url(#g2)" rx="0.4"/><rect x="363.14" y="446.60" width="3.49" height="11.40" fill="url(#g2)" rx="0.4"/><rect x="367.35" y="446.60" width="3.49" height="11.40" fill="url(#g2)" rx="0.4"/><rect x="371.56" y="446.60" width="3.49" height="11.40" fill="url(#g2)" rx="0.4"/><rect x="375.77" y="446.60" width="3.49" height="11.40" fill="#264a2c" rx="0.4"/><rect x="379.98" y="446.60" width="3.49" height="11.40" fill="#264a2c" rx="0.4"/><rect x="384.18" y="446.60" width="3.49" height="11.40" fill="#264a2c" rx="0.4"/><rect x="388.39" y="446.60" width="3.49" height="11.40" fill="#264a2c" rx="0.4"/><rect x="392.60" y="446.60" width="3.49" height="11.40" fill="#264a2c" rx="0.4"/><rect x="396.81" y="446.60" width="3.49" height="11.40" fill="#264a2c" rx="0.4"/></svg>
<span class="t" style="left:410.00px;top:447.00px;font-size:7.6px;line-height:11px;height:11px;color:#73bf69;font-weight:400;letter-spacing:-0.320px;-webkit-text-stroke:0.19px #73bf69;">80%</span>
<svg style="left:0;top:0" width="752" height="469" viewBox="0 0 752 469"><defs><linearGradient id="g3" x1="0" y1="0" x2="0" y2="1"><stop offset="0" stop-color="#55a34c"/><stop offset="0.5" stop-color="#6fbd65"/><stop offset="1" stop-color="#55a34c"/></linearGradient></defs><rect x="295.80" y="464.50" width="3.49" height="11.50" fill="url(#g3)" rx="0.4"/><rect x="300.01" y="464.50" width="3.49" height="11.50" fill="url(#g3)" rx="0.4"/><rect x="304.22" y="464.50" width="3.49" height="11.50" fill="url(#g3)" rx="0.4"/><rect x="308.43" y="464.50" width="3.49" height="11.50" fill="url(#g3)" rx="0.4"/><rect x="312.64" y="464.50" width="3.49" height="11.50" fill="url(#g3)" rx="0.4"/><rect x="316.84" y="464.50" width="3.49" height="11.50" fill="url(#g3)" rx="0.4"/><rect x="321.05" y="464.50" width="3.49" height="11.50" fill="url(#g3)" rx="0.4"/><rect x="325.26" y="464.50" width="3.49" height="11.50" fill="url(#g3)" rx="0.4"/><rect x="329.47" y="464.50" width="3.49" height="11.50" fill="url(#g3)" rx="0.4"/><rect x="333.68" y="464.50" width="3.49" height="11.50" fill="url(#g3)" rx="0.4"/><rect x="337.89" y="464.50" width="3.49" height="11.50" fill="url(#g3)" rx="0.4"/><rect x="342.10" y="464.50" width="3.49" height="11.50" fill="url(#g3)" rx="0.4"/><rect x="346.31" y="464.50" width="3.49" height="11.50" fill="url(#g3)" rx="0.4"/><rect x="350.51" y="464.50" width="3.49" height="11.50" fill="url(#g3)" rx="0.4"/><rect x="354.72" y="464.50" width="3.49" height="11.50" fill="url(#g3)" rx="0.4"/><rect x="358.93" y="464.50" width="3.49" height="11.50" fill="url(#g3)" rx="0.4"/><rect x="363.14" y="464.50" width="3.49" height="11.50" fill="url(#g3)" rx="0.4"/><rect x="367.35" y="464.50" width="3.49" height="11.50" fill="url(#g3)" rx="0.4"/><rect x="371.56" y="464.50" width="3.49" height="11.50" fill="url(#g3)" rx="0.4"/><rect x="375.77" y="464.50" width="3.49" height="11.50" fill="url(#g3)" rx="0.4"/><rect x="379.98" y="464.50" width="3.49" height="11.50" fill="url(#g3)" rx="0.4"/><rect x="384.18" y="464.50" width="3.49" height="11.50" fill="url(#g3)" rx="0.4"/><rect x="388.39" y="464.50" width="3.49" height="11.50" fill="url(#g3)" rx="0.4"/><rect x="392.60" y="464.50" width="3.49" height="11.50" fill="url(#g3)" rx="0.4"/><rect x="396.81" y="464.50" width="3.49" height="11.50" fill="url(#g3)" rx="0.4"/></svg>
<span class="t" style="left:155.75px;top:465.00px;font-size:7.6px;line-height:11px;height:11px;color:#6e9fff;font-weight:400;letter-spacing:0.003px;-webkit-text-stroke:0.19px #6e9fff;">main-lint</span>
<span class="t" style="left:406.50px;top:465.00px;font-size:7.6px;line-height:11px;height:11px;color:#73bf69;font-weight:400;letter-spacing:-0.422px;-webkit-text-stroke:0.19px #73bf69;">100%</span>
<svg style="left:0;top:0" width="752" height="469" viewBox="0 0 752 469"><rect x="442.80" y="407.00" width="288.40" height="73.00" fill="#1b1d22" rx="1" stroke="#26282e" stroke-width="0.6"/></svg>
<span class="t" style="left:446.75px;top:410.00px;font-size:7.6px;line-height:11px;height:11px;color:#d4d5e3;font-weight:400;letter-spacing:0.169px;-webkit-text-stroke:0.32px #d4d5e3;">Recent builds</span>
<span class="t" style="left:450.00px;top:430.00px;font-size:7.4px;line-height:11px;height:11px;color:#d4d5e3;font-weight:400;letter-spacing:0.232px;-webkit-text-stroke:0.31px #d4d5e3;">Build #</span>
<span class="t" style="left:528.25px;top:430.00px;font-size:7.4px;line-height:11px;height:11px;color:#d4d5e3;font-weight:400;letter-spacing:0.309px;-webkit-text-stroke:0.31px #d4d5e3;">Start time</span>
<span class="t" style="left:606.50px;top:430.00px;font-size:7.4px;line-height:11px;height:11px;color:#d4d5e3;font-weight:400;letter-spacing:0.254px;-webkit-text-stroke:0.31px #d4d5e3;">Status</span>
<div class="b" style="left:725.2px;top:430px;width:2.3px;height:12px;overflow:hidden"><span class="t" style="left:0;top:1.4px;font-size:7.4px;line-height:9px;color:#d4d5e3;font-weight:700">D</span></div>
<div class="b" style="left:725.4px;top:446px;width:1.6px;height:12px;overflow:hidden"><span class="t" style="left:0;top:1.5px;font-size:7.6px;line-height:9px;color:#8f91a0">0</span></div>
<svg style="left:0;top:0" width="752" height="469" viewBox="0 0 752 469"><rect x="446.50" y="443.50" width="281.50" height="0.60" fill="#25282e"/><rect x="446.50" y="461.30" width="281.50" height="0.60" fill="#25282e"/><rect x="524.30" y="444.00" width="0.60" height="36.00" fill="#1f2227"/></svg>
<span class="t" style="left:450.00px;top:447.00px;font-size:7.6px;line-height:11px;height:11px;color:#6e9fff;font-weight:400;letter-spacing:0.023px;-webkit-text-stroke:0.19px #6e9fff;">144813</span>
<span class="t" style="left:528.25px;top:447.00px;font-size:7.6px;line-height:11px;height:11px;color:#d0d1df;font-weight:400;letter-spacing:0.093px;-webkit-text-stroke:0.10px #d0d1df;">2023-11-03 21:12:...</span>
<svg style="left:0;top:0" width="752" height="469" viewBox="0 0 752 469"><defs><linearGradient id="g4" x1="0" y1="0" x2="1" y2="0"><stop offset="0" stop-color="#56a64b"/><stop offset="1" stop-color="#73bf69"/></linearGradient></defs><rect x="603.20" y="443.00" width="78.40" height="18.20" fill="url(#g4)"/></svg>
<span class="t" style="left:606.50px;top:447.00px;font-size:7.6px;line-height:11px;height:11px;color:#ffffff;font-weight:400;letter-spacing:0.040px;-webkit-text-stroke:0.19px #ffffff;">Success</span>
<svg style="left:0;top:0" width="752" height="469" viewBox="0 0 752 469"><defs><linearGradient id="g5" x1="0" y1="0" x2="1" y2="0"><stop offset="0" stop-color="#56a64b"/><stop offset="1" stop-color="#73bf69"/></linearGradient></defs><rect x="603.20" y="461.20" width="78.40" height="18.80" fill="url(#g5)"/><rect x="603.20" y="461.20" width="78.40" height="0.60" fill="#3f8a3a"/></svg>
<span class="t" style="left:450.00px;top:465.00px;font-size:7.6px;line-height:11px;height:11px;color:#6e9fff;font-weight:400;letter-spacing:0.023px;-webkit-text-stroke:0.19px #6e9fff;">144812</span>
<span class="t" style="left:528.25px;top:465.00px;font-size:7.6px;line-height:11px;height:11px;color:#d0d1df;font-weight:400;letter-spacing:0.093px;-webkit-text-stroke:0.10px #d0d1df;">2023-11-03 20:53:...</span>
<span class="t" style="left:606.50px;top:465.00px;font-size:7.6px;line-height:11px;height:11px;color:#ffffff;font-weight:400;letter-spacing:0.040px;-webkit-text-stroke:0.19px #ffffff;">Success</span>
</div></body></html>
